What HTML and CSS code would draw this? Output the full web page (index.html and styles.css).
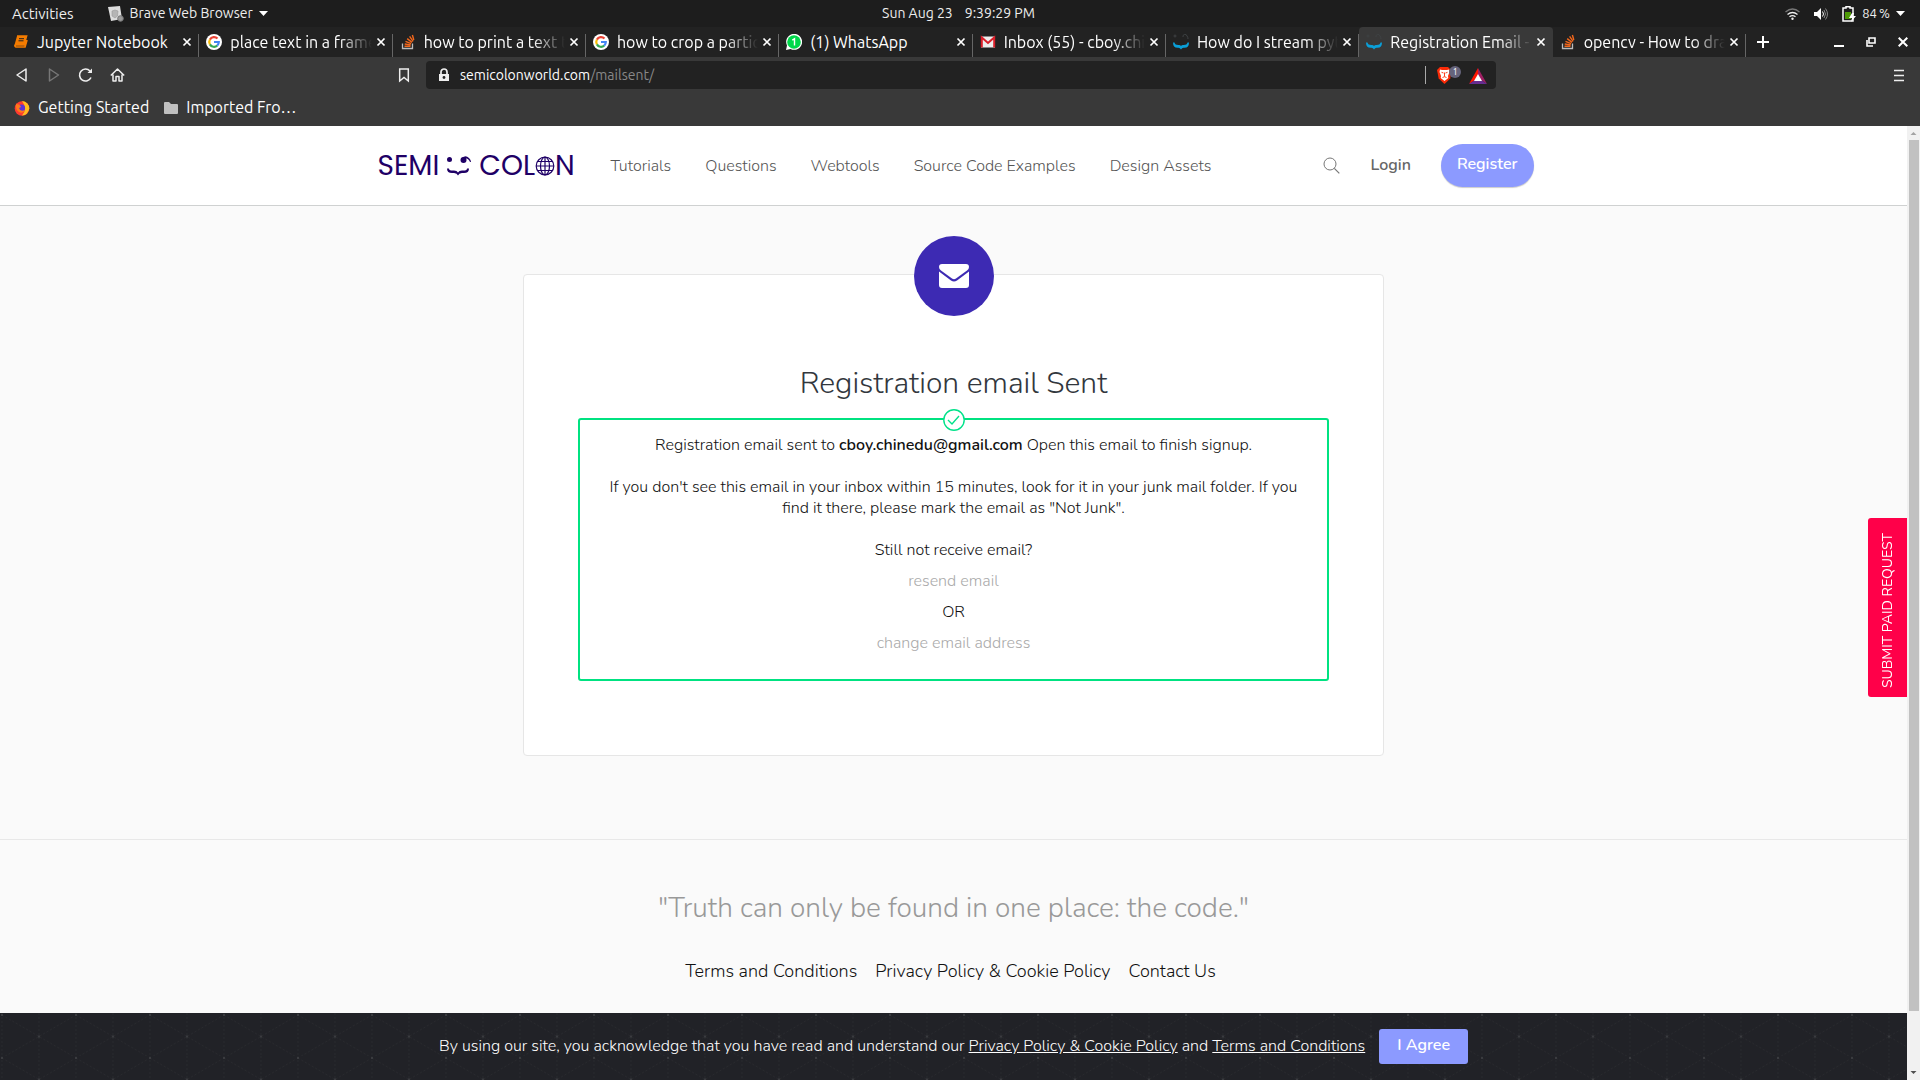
FILE: index.html
```html
<!DOCTYPE html>
<html lang="en">
<head>
<meta charset="utf-8">
<meta name="viewport" content="width=device-width, initial-scale=1">
<title>Registration Email - Semicolon</title>
<link rel="stylesheet" href="styles.css">
</head>
<body>
<svg class="defs" aria-hidden="true">
  <symbol id="google" viewBox="0 0 16 16"><circle cx="8" cy="8" r="8" fill="#fff"/><g fill="none" stroke-width="2.2"><path d="M3.9 5.6A4.8 4.8 0 0 1 11.5 4.6" stroke="#ea4335"/><path d="M3.9 10.4A4.8 4.8 0 0 1 3.9 5.6" stroke="#fbbc05"/><path d="M11.2 11.6A4.8 4.8 0 0 1 3.9 10.4" stroke="#34a853"/><path d="M8 8h4.8A4.8 4.8 0 0 1 11.2 11.6" stroke="#4285f4"/></g></symbol>
  <symbol id="stack" viewBox="0 0 16 16"><path d="M2.500 9.500v5h10v-5" fill="none" stroke="#bcbbbb" stroke-width="1.300"/><path d="M4.500 12.300h6M4.700 10l6 .9M5.500 7.300l5.600 2.300M7.200 4.600l4.800 3.800M9.600 2.300l3.500 5M12.400 1l1.400 5" fill="none" stroke="#f4681c" stroke-width="1.400"/></symbol>
  <symbol id="face" viewBox="0 0 16 16"><g fill="none" stroke="#3f4244"><circle cx="2" cy="2" r="1"/><path d="M10 3a2 2 0 0 1 4-1q1 1 1 3"/></g><path d="M0 8.500h1.500Q2 11.300 6 11Q7.500 11 8 12Q8.500 11 10 11Q14 11.300 14.500 8.500H16Q16 14 11 13.700Q9 13.500 8 15.500Q7 13.500 5 13.700Q0 14 0 8.500z" fill="#0a9fd8"/></symbol>
  <symbol id="close" viewBox="0 0 10 10"><path d="M1.500 1.500l7 7M8.500 1.500l-7 7" stroke="#fff" stroke-width="1.700"/></symbol>
</svg>

<div class="system-bar">
  <div class="sys-left">
    <button class="plain activities">Activities</button>
    <button class="plain sys-app">
      <svg width="16" height="16" viewBox="0 0 16 16"><path d="M0 1l12-1 2 13-11 2z" fill="#ddd"/><path d="M4 5l3-1 3 1-.5 5L7 12l-3-2z" fill="#b5b5b5" stroke="#999" stroke-width=".6"/><circle cx="12.500" cy="12.500" r="2.800" fill="#999" stroke="#777"/></svg>
      Brave Web Browser
      <svg width="9" height="5" viewBox="0 0 9 5"><path d="M0 0h9L4.500 5z" fill="#fff"/></svg>
    </button>
  </div>
  <div class="sys-clock"><span>Sun Aug 23</span><span>9:39:29 PM</span></div>
  <div class="sys-right">
    <svg width="15" height="12" viewBox="0 0 15 12"><g fill="none" stroke-width="1.300"><path d="M.5 4Q7.500-2 14.500 4" stroke="#777"/><path d="M2.500 6.500q5-4 10 0M4.500 8.800q3-2.400 6 0" stroke="#eee"/></g><circle cx="7.500" cy="10.800" r="1.200" fill="#eee"/></svg>
    <svg class="vol" width="14" height="12" viewBox="0 0 14 12"><path d="M0 4h3l4-4v12L3 8H0z" fill="#fff"/><path d="M8.500 3.500q2 2.500 0 5" fill="none" stroke="#fff"/><path d="M10 2q3 4 0 8M11.500.5q4 5.500 0 11" fill="none" stroke="#888"/></svg>
    <svg width="14" height="16" viewBox="0 0 14 16"><path d="M4 2V.8h4V2h3v13H1V2z" fill="none" stroke="#fff" stroke-width="1.500"/><path d="M3 6h6v7H3z" fill="#4e9a06"/><path d="M10 7l-3 5h3l-1 4 5-6h-3l1-3z" fill="#fff"/></svg>
    <span>84&#8201;%</span>
    <svg width="9" height="5" viewBox="0 0 9 5"><path d="M0 0h9L4.500 5z" fill="#fff"/></svg>
  </div>
</div>

<div class="tab-strip">
  <div class="tabs">
    <div class="tab"><svg width="16" height="16" viewBox="0 0 16 16"><path d="M4 2h9.500l-2.500 9H3q-1.500 0-1 1t1 1h9l2-7" fill="none" stroke="#f57c00" stroke-width="1.700"/><path d="M4 2h9.500L11 11H1.500z" fill="#f57c00"/><path d="M6 4.700h5M5.500 6.800h5" stroke="#222"/></svg><span>Jupyter Notebook</span><button class="plain" aria-label="Close tab"><svg width="10" height="10"><use href="#close"/></svg></button></div>
    <div class="tab"><svg width="16" height="16"><use href="#google"/></svg><span>place text in a frame</span><button class="plain" aria-label="Close tab"><svg width="10" height="10"><use href="#close"/></svg></button></div>
    <div class="tab"><svg width="16" height="16"><use href="#stack"/></svg><span>how to print a text t</span><button class="plain" aria-label="Close tab"><svg width="10" height="10"><use href="#close"/></svg></button></div>
    <div class="tab"><svg width="16" height="16"><use href="#google"/></svg><span>how to crop a partic</span><button class="plain" aria-label="Close tab"><svg width="10" height="10"><use href="#close"/></svg></button></div>
    <div class="tab"><svg width="16" height="16" viewBox="0 0 16 16"><path d="M0 16l1-4.500A8 8 0 1 1 4.500 15z" fill="#fff"/><circle cx="8" cy="8" r="6.800" fill="#00d84a"/><path d="M6.300 6.200L8.500 4.800V11.500" fill="none" stroke="#fff" stroke-width="1.400"/></svg><span>(1) WhatsApp</span><button class="plain" aria-label="Close tab"><svg width="10" height="10"><use href="#close"/></svg></button></div>
    <div class="tab"><svg width="16" height="16" viewBox="0 0 16 16"><path d="M1 2.500h14v11H1z" fill="#eee"/><path d="M1.800 13.500V3.500L8 9l6.200-5.500v10" fill="none" stroke="#db1f2a" stroke-width="2"/></svg><span>Inbox (55) - cboy.chi</span><button class="plain" aria-label="Close tab"><svg width="10" height="10"><use href="#close"/></svg></button></div>
    <div class="tab"><svg width="16" height="16"><use href="#face"/></svg><span>How do I stream pyt</span><button class="plain" aria-label="Close tab"><svg width="10" height="10"><use href="#close"/></svg></button></div>
    <div class="tab active"><svg width="16" height="16"><use href="#face"/></svg><span>Registration Email -</span><button class="plain" aria-label="Close tab"><svg width="10" height="10"><use href="#close"/></svg></button></div>
    <div class="tab"><svg width="16" height="16"><use href="#stack"/></svg><span>opencv - How to dra</span><button class="plain" aria-label="Close tab"><svg width="10" height="10"><use href="#close"/></svg></button></div>
  </div>
  <button class="plain new-tab" aria-label="New tab"><svg width="12" height="12" viewBox="0 0 12 12"><path d="M6 0v12M0 6h12" stroke="#fff" stroke-width="2"/></svg></button>
  <div class="window-buttons">
    <button class="plain" aria-label="Minimize"><svg width="10" height="10" viewBox="0 0 10 10"><path d="M0 9h10" stroke="#fff" stroke-width="2"/></svg></button>
    <button class="plain" aria-label="Restore"><svg width="10" height="10" viewBox="0 0 10 10"><path d="M3 1h6v5H3zM1 3v6h6" fill="none" stroke="#fff" stroke-width="1.600"/></svg></button>
    <button class="plain" aria-label="Close window"><svg width="10" height="10" viewBox="0 0 10 10"><path d="M.7.7l8.600 8.600M9.300.7L.7 9.300" stroke="#fff" stroke-width="2"/></svg></button>
  </div>
</div>

<div class="toolbar">
  <div class="nav-buttons">
    <button class="plain" aria-label="Back"><svg width="16" height="16" viewBox="0 0 16 16"><path d="M12 2v12L3 8z" fill="none" stroke="#eee" stroke-width="1.500" stroke-linejoin="round"/></svg></button>
    <button class="plain" aria-label="Forward"><svg width="16" height="16" viewBox="0 0 16 16"><path d="M3.500 2v12l9-6z" fill="none" stroke="#777" stroke-width="1.500" stroke-linejoin="round"/></svg></button>
    <button class="plain" aria-label="Reload"><svg width="16" height="16" viewBox="0 0 16 16"><path d="M12 4A6 6 0 1 0 13 10.500" fill="none" stroke="#eee" stroke-width="1.600"/><path d="M14 1.500v4.500H9.500z" fill="#eee"/></svg></button>
    <button class="plain" aria-label="Home"><svg width="16" height="16" viewBox="0 0 16 16"><path d="M.8 8.500L7.500 2l6.700 6.500M3 7.500V14h3V9.500h3V14h3V7.500" fill="none" stroke="#eee" stroke-width="1.500" stroke-linejoin="round"/></svg></button>
  </div>
  <button class="plain bookmark" aria-label="Bookmark"><svg width="12" height="16" viewBox="0 0 12 16"><path d="M1.700 2h8.600v12L6 10.500 1.700 14z" fill="none" stroke="#eee" stroke-width="1.500"/></svg></button>
  <div class="address">
    <svg width="12" height="14" viewBox="0 0 12 14"><path d="M3 6V4a3 3 0 0 1 6 0v2" fill="none" stroke="#eee" stroke-width="1.700"/><path d="M1 6h10v7H1z" fill="#eee"/><circle cx="6" cy="9.500" r="1.400" fill="#222"/></svg>
    <span class="url"><b>semicolonworld.com</b>/mailsent/</span>
    <span class="address-icons">
      <svg width="24" height="18" viewBox="0 0 24 18"><path d="M3 1h8l3 3-.7 8.500L7.500 18 1.700 12.500 0 4z" fill="#fb2b07"/><path d="M3 3.500l2 .5h5l2-.5.500 2.500-1.500 4 .3 2-3.800 3-3.800-3 .3-2L2.500 6z" fill="#fff"/><path d="M4.500 6.300l2 .7M10.500 6.300l-2 .7M7.500 6.500v4M5.500 11.500l2-.8 2 .8" fill="none" stroke="#fb2b07" stroke-width=".9"/><circle cx="18" cy="6" r="6" fill="#66647c"/><text x="16" y="9" class="badge">1</text></svg>
      <svg width="18" height="16" viewBox="0 0 18 16"><path d="M9 0L0 16 9 10z" fill="#ff1500"/><path d="M9 0l9 16-9-6z" fill="#9e1f63"/><path d="M0 16h18l-9-6z" fill="#662d91"/><path d="M9 6l4 7H5z" fill="#fff"/></svg>
    </span>
  </div>
  <button class="plain menu" aria-label="Menu"><svg width="10" height="13" viewBox="0 0 10 13"><path d="M0 1.500h10M0 6.500h10M0 11.500h10" stroke="#eee" stroke-width="1.400"/></svg></button>
</div>

<div class="bookmarks">
  <a href="#"><svg width="16" height="16" viewBox="0 0 16 16"><circle cx="8" cy="8.500" r="7.300" fill="#ff3b30"/><path d="M8 1q7 1 7.300 7.500Q14 15 8 15.500 14 9 8 1z" fill="#ffbd1f"/><circle cx="7.500" cy="8" r="3.600" fill="#5b35d5"/><path d="M2 4q4 0 5 3l-2 1q1 4 6 2-2 4-6 2Q1 9 2 4z" fill="#ff7a1a"/></svg>Getting Started</a>
  <a href="#"><svg width="14" height="12" viewBox="0 0 14 12"><path d="M0 1q0-1 1-1h4l2 2h6q1 0 1 1v8q0 1-1 1H1q-1 0-1-1z" fill="#c0c0c0"/></svg>Imported Fro…</a>
</div>

<div class="viewport">
  <div class="page">
    <header class="site-header">
      <div class="header-inner">
        <a class="logo" href="#" aria-label="Semicolon"><span>SEMI</span>
          <svg width="26" height="20" viewBox="0 0 26 20"><g fill="#1f0066"><circle cx="3.500" cy="3.500" r="2.500"/><circle cx="17.500" cy="4" r="3"/><path d="M15 3q4-5 8-1 2 2 2 4l-1 0q-2-5-6-3z"/><path d="M1 12.500h2q0 2.500 5 2 3 0 4 2 1-2 4-2 5 .5 5-2h2q0 5-6 4.500-4-.5-5 2.500-1-3-5-2.500-6 .5-6-4.500z"/></g></svg>
          <span>COL</span><svg width="20" height="20" viewBox="0 0 20 20"><g fill="none" stroke="#1f0066" stroke-width="1.200"><circle cx="10" cy="10" r="8.800"/><ellipse cx="10" cy="10" rx="4.500" ry="8.800"/><path d="M10 1v18M1 10h18M2.500 5.500h15M2.500 14.500h15"/></g></svg><span>N</span></a>
        <nav class="main-nav">
          <a href="#">Tutorials</a><a href="#">Questions</a><a href="#">Webtools</a><a href="#">Source Code Examples</a><a href="#">Design Assets</a>
        </nav>
        <div class="account">
          <button class="plain" aria-label="Search"><svg width="17" height="17" viewBox="0 0 17 17"><circle cx="7" cy="7" r="6" fill="none" stroke="#777"/><path d="M11.300 11.300l5 5" stroke="#777" stroke-width="1.200"/></svg></button>
          <a class="login" href="#">Login</a>
          <button class="register">Register</button>
        </div>
      </div>
    </header>

    <main>
      <section class="card">
        <div class="card-badge"><svg width="30" height="24" viewBox="0 0 30 24"><path d="M0 3q0-3 3-3h24q3 0 3 3 0 2-2 3.500L17 14.500q-2 1.500-4 0L2 6.500Q0 5 0 3zM0 7.500l12 9q3 2 6 0l12-9V21q0 3-3 3H3q-3 0-3-3z" fill="#fff"/></svg></div>
        <h1>Registration email Sent</h1>
        <div class="notice">
          <svg class="check" width="22" height="22" viewBox="0 0 22 22"><circle cx="11" cy="11" r="10.200" fill="#fff" stroke="#00e28a" stroke-width="1.400"/><path d="M5 11l4 4 7-8" fill="none" stroke="#00e28a" stroke-width="1.400"/></svg>
          <p class="para">Registration email sent to <strong>cboy.chinedu@gmail.com</strong> Open this email to finish signup.</p>
          <p class="para">If you don't see this email in your inbox within 15 minutes, look for it in your junk mail folder. If you<br>find it there, please mark the email as "Not Junk".</p>
          <p>Still not receive email?</p>
          <p><a href="#">resend email</a></p>
          <p>OR</p>
          <p><a href="#">change email address</a></p>
        </div>
      </section>
    </main>

    <footer>
      <p class="quote">"Truth can only be found in one place: the code."</p>
      <nav class="footer-links"><a href="#">Terms and Conditions</a><a href="#">Privacy Policy &amp; Cookie Policy</a><a href="#">Contact Us</a></nav>
    </footer>
  </div>
  <div class="scrollbar" aria-hidden="true">
    <svg width="13" height="14" viewBox="0 0 13 14"><path d="M3.500 9h6l-3-3z" fill="#a3a3a3"/></svg>
    <div class="thumb"></div>
    <svg width="13" height="14" viewBox="0 0 13 14"><path d="M3.500 5h6l-3 3z" fill="#505050"/></svg>
  </div>
</div>

<button class="paid-request">SUBMIT PAID REQUEST</button>

<div class="cookie-bar">
  <svg class="cookie-pattern" aria-hidden="true">
    <defs><pattern id="mesh" width="74" height="43" patternUnits="userSpaceOnUse">
      <g fill="none" stroke="#28292d" stroke-dasharray="2 2"><path d="M2 0v43M39 0v43"/><path d="M2 2l37 21.500L2 45M76 2L39 23.500 76 45"/></g>
      <path d="M1 1h2v2H1zM38 22.500h2v2h-2z" fill="#3a3b3f"/>
    </pattern></defs>
    <rect width="100%" height="100%" fill="url(#mesh)"/>
  </svg>
  <p>By using our site, you acknowledge that you have read and understand our <a href="#">Privacy Policy &amp; Cookie Policy</a> and <a href="#">Terms and Conditions</a></p>
  <button class="agree">I Agree</button>
</div>
</body>
</html>
```
FILE: styles.css
```css
* { box-sizing: border-box; }

body {
  margin: 0;
  min-height: 100vh;
  display: flex;
  flex-direction: column;
  background: #fafafa;
  color: #111;
  font: 310 16px/21px Nunito, Lato, sans-serif;
}

p, h1 { margin: 0; font-weight: 310; }
strong { font-weight: 600; }
a { color: inherit; text-decoration: none; }
svg { display: block; flex: none; }
button { font: inherit; cursor: pointer; }
.defs { position: absolute; width: 0; height: 0; }
.plain { padding: 0; border: 0; background: none; color: inherit; }

/* Desktop bar */
.system-bar, .tab-strip, .toolbar, .bookmarks { font-family: Ubuntu, "Noto Sans", sans-serif; font-weight: 400; color: #fff; }
.system-bar {
  display: grid;
  grid-template-columns: 1fr auto 1fr;
  align-items: center;
  height: 27px;
  padding: 0 15px 0 12px;
  background: #1d1d1d;
  color: #eee;
  font-size: 14px;
}
.sys-left, .sys-right, .sys-clock, .sys-app { display: flex; align-items: center; }
.sys-left { gap: 34px; }
.activities { font-size: 15px; }
.sys-app { gap: 6px; }
.sys-clock { gap: 12px; }
.sys-right { justify-content: flex-end; gap: 6px; font-size: 13px; }
.vol { margin: 0 8px; }

/* Tabs */
.tab-strip { display: flex; height: 30px; padding: 0 12px 0 6px; background: #222; }
.tabs { display: flex; flex: 0 1 1740px; min-width: 0; }
.tab {
  display: flex;
  flex: 1 1 0;
  align-items: center;
  gap: 8px;
  min-width: 0;
  padding: 0 7px;
  font-size: 16px;
  background: linear-gradient(#666, #666) right bottom / 1px 23px no-repeat;
}
.tab span {
  flex: 1;
  margin-right: -4px;
  overflow: hidden;
  white-space: nowrap;
  -webkit-mask-image: linear-gradient(90deg, #000 calc(100% - 32px), transparent);
  mask-image: linear-gradient(90deg, #000 calc(100% - 32px), transparent);
}
.tab:first-child span, .tab:nth-child(5) span { -webkit-mask-image: none; mask-image: none; }
.tab.active { background: #393939; border-radius: 4px 4px 0 0; }
.new-tab { margin-left: 11px; }
.window-buttons { display: flex; gap: 22px; margin-left: auto; }

/* Toolbar */
.toolbar { display: flex; align-items: center; height: 36px; padding: 0 16px 0 14px; background: #393939; }
.nav-buttons { display: flex; gap: 16px; width: 384px; }
.bookmark { margin-right: 16px; }
.address {
  display: flex;
  align-items: center;
  flex: 0 1 1070px;
  height: 28px;
  padding: 0 9px 0 12px;
  gap: 10px;
  border-radius: 4px;
  background: #222;
  font-size: 14px;
}
.url { color: #888; }
.url b { color: #fff; font-weight: 400; }
.address-icons { display: flex; align-items: center; gap: 8px; margin-left: auto; padding-left: 11px; border-left: 1px solid #aaa; }
.address-icons svg:last-child { margin-top: 2px; }
.badge { font: 8px "Noto Sans", sans-serif; fill: #fff; }
.menu { margin-left: auto; }
.bookmarks { display: flex; gap: 15px; height: 33px; padding: 4px 14px 0; background: #393939; font-size: 16px; }
.bookmarks a { display: flex; align-items: center; gap: 8px; height: 21px; }

/* Page */
.viewport { display: flex; flex: 1; }
.page { display: flex; flex: 1; flex-direction: column; min-width: 0; }
.site-header { background: #fff; border-bottom: 1px solid #cfd1d1; }
.header-inner { display: flex; align-items: center; max-width: 1160px; height: 79px; margin: 0 auto; padding: 0 0 0 4px; }
.logo { display: flex; align-items: center; width: 200px; margin-right: 33px; color: #1f0066; font: 28px/28px Poppins, Inter, sans-serif; }
.logo span + svg { margin-left: 7px; margin-right: 7px; }
.logo span:nth-of-type(2) + svg { margin: 0; }
.main-nav { display: flex; gap: 34px; padding-top: 2px; color: #555; white-space: nowrap; }
.account { display: flex; align-items: center; gap: 30px; margin-left: auto; }
.login { color: #666; font-weight: 600; }
.register {
  height: 43px;
  padding: 0 16px 2px;
  border: 0;
  border-radius: 22px;
  background: #8c9aff;
  color: #fff;
  font-weight: 600;
  box-shadow: 0 1px 1px #ccc;
}

main { padding: 68px 20px 83px; }
.card {
  position: relative;
  max-width: 861px;
  margin: 0 auto;
  padding: 89px 54px 74px;
  border: 1px solid #e6e6e6;
  border-radius: 4px;
  background: #fff;
  text-align: center;
}
.card-badge {
  position: absolute;
  top: -39px;
  left: calc(50% - 40px);
  display: grid;
  place-items: center;
  width: 80px;
  height: 80px;
  border-radius: 50%;
  background: #3d2ab3;
}
h1 { margin-bottom: 14px; color: #32373d; font-size: 30px; line-height: 40px; }
.notice { position: relative; padding: 15px 20px 25px; border: 2px solid #00e281; border-radius: 3px; }
.check { position: absolute; top: -11px; left: calc(50% - 11px); }
.notice p + p { margin-top: 10px; }
.notice .para + p { margin-top: 21px; }
.notice a { color: #aaa; }

footer { flex: 1; padding: 48px 20px 80px; border-top: 1px solid #e8e8e8; text-align: center; }
.quote { color: #999; font-size: 28px; line-height: 40px; }
.footer-links { display: flex; justify-content: center; gap: 18px; margin: 31px 6px 0 0; font-size: 18px; line-height: 24px; }

.scrollbar { display: flex; flex: none; flex-direction: column; width: 13px; background: #f1f1f1; }
.thumb { flex: 0 1 871px; margin: 0 1px 0 2px; background: #c1c1c1; }
.scrollbar svg:last-child { margin-top: auto; }

.paid-request {
  position: fixed;
  right: 13px;
  top: 518px;
  width: 39px;
  height: 179px;
  padding: 0 0 6px;
  border: 0;
  border-radius: 0 3px 3px 0;
  background: #ff0049;
  color: #fff;
  font-size: 14px;
  font-weight: 400;
  writing-mode: vertical-rl;
  transform: rotate(180deg);
}

.cookie-bar {
  position: fixed;
  left: 0;
  right: 13px;
  bottom: 0;
  display: flex;
  align-items: center;
  justify-content: center;
  gap: 14px;
  min-height: 67px;
  background: #212227;
  color: #fff;
}
.cookie-bar a { text-decoration: underline; }
.cookie-bar p, .agree { position: relative; }
.cookie-pattern { position: absolute; inset: 0; width: 100%; height: 100%; }
.agree { height: 35px; padding: 0 18px 2px; border: 0; border-radius: 3px; background: #8c9aff; color: #fff; font-weight: 600; }
```
